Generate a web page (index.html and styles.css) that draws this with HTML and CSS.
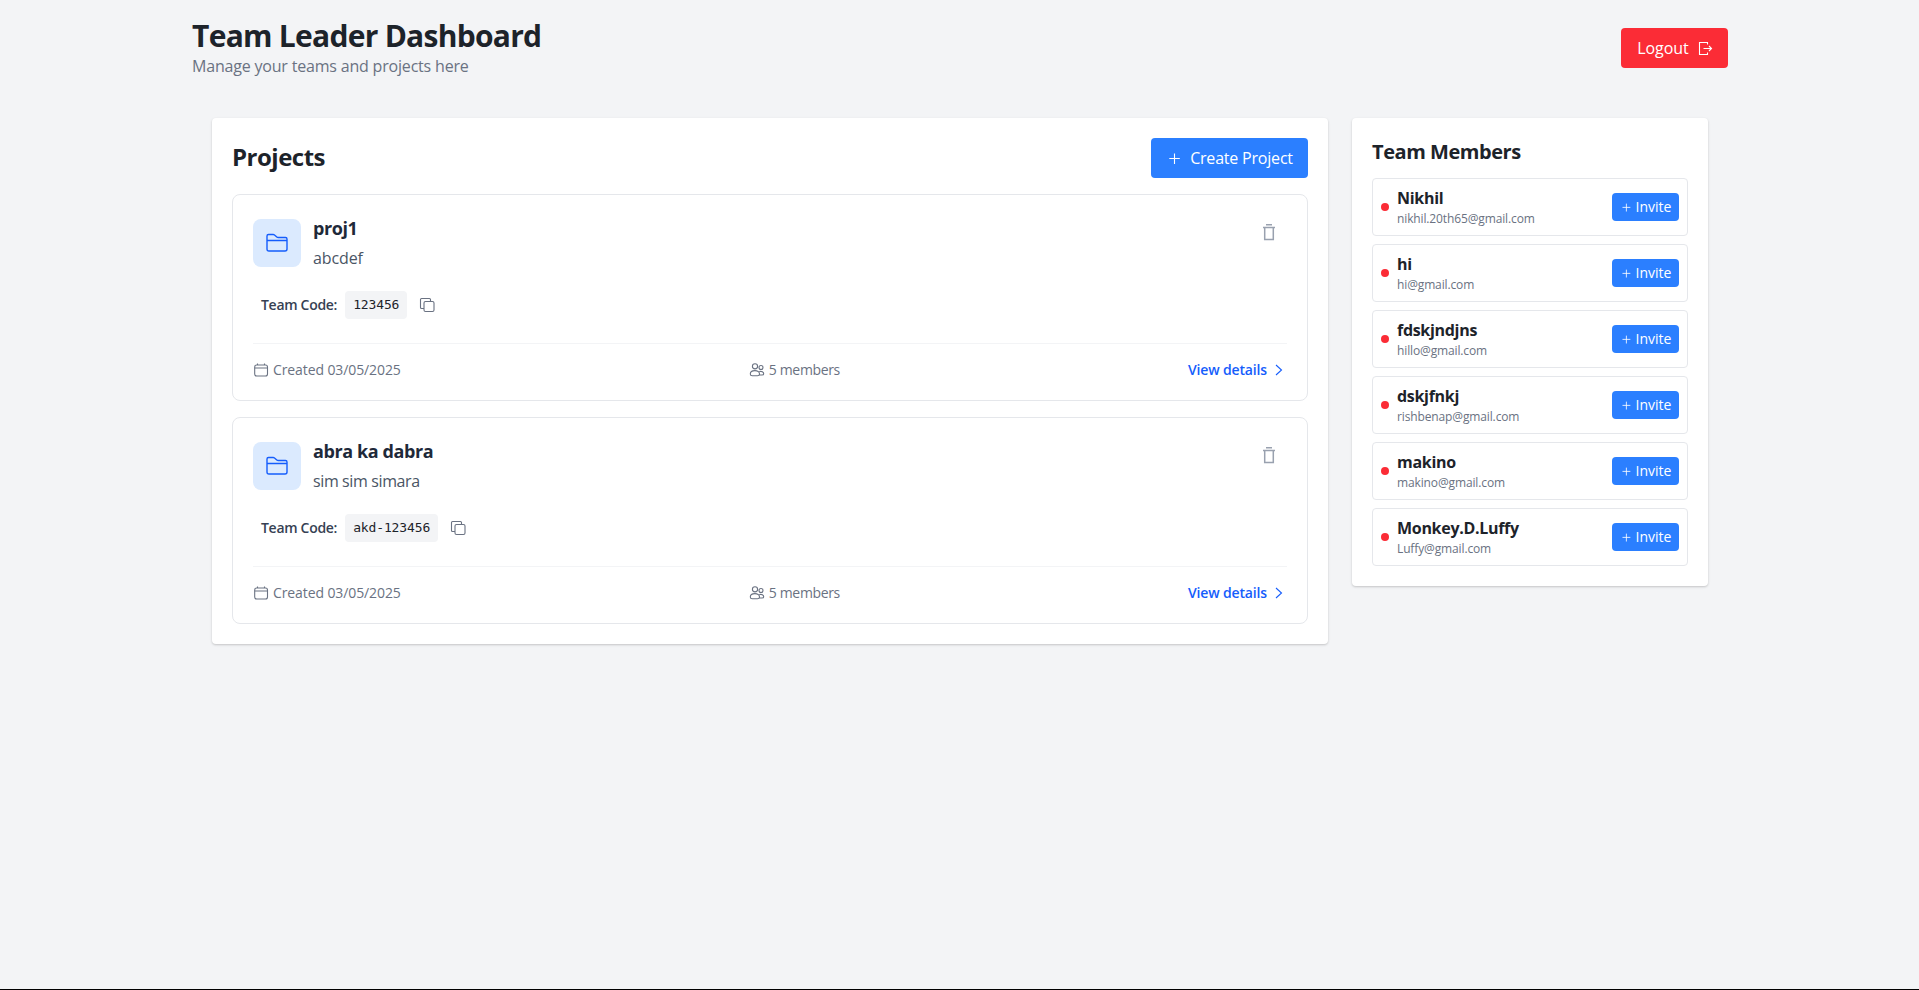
FILE: index.html
```
<!DOCTYPE html>
<html lang="en">
<head>
<meta charset="utf-8">
<title>Team Leader Dashboard</title>
<link rel="stylesheet" href="styles.css">
</head>
<body>
<svg class="sprite" aria-hidden="true">
  <symbol id="folder" viewBox="0 0 24 24"><path d="M2 9.500h20M2 18V5Q2 3.500 3.500 3.500h4.600q.8 0 1.400.5l2.300 2q.6.500 1.400.500h7.300Q22 6.500 22 8V18q0 2-2 2H4q-2 0-2-2z"/></symbol>
  <symbol id="trash" viewBox="0 0 20 20"><path d="M4 5.500h12M7 2.800h6M5.700 5.500v12h8.600v-12"/></symbol>
  <symbol id="copy" viewBox="0 0 16 16"><rect x="5" y="4.500" width="10" height="10" rx="1.500"/><path d="M5 11.500H2.500q-1 0-1-1v-8q0-1 1-1h8q1 0 1 1V4.500"/></symbol>
  <symbol id="calendar" viewBox="0 0 16 16"><rect x="1.700" y="3" width="12.800" height="11" rx="2"/><path d="M1.700 6h12.800M4.500 1.500v1.500M11.500 1.500v1.500"/></symbol>
  <symbol id="people" viewBox="0 0 16 16"><circle cx="6" cy="4.300" r="2.600"/><circle cx="12" cy="5.500" r="2"/><path d="M1.300 12c0-2 2-3.400 4.600-3.400s4.600 1.400 4.600 3.400c0 1.300-.9 1.800-2 1.800H3.300c-1.100 0-2-.5-2-1.800zM10.300 9.600c2.300-.8 4.400.4 4.400 2.100 0 .9-.6 1.300-1.600 1.300h-2.600"/></symbol>
  <symbol id="chevron" viewBox="0 0 16 16"><path d="M5 3l5.500 5L5 13"/></symbol>
  <symbol id="plus" viewBox="0 0 16 16"><path d="M8.500 3.500v10.500M3.300 8.500h10.500"/></symbol>
  <symbol id="exit" viewBox="0 0 16 16"><path d="M10.500 4.500V2.500h-8v12h8V12.500M6.500 8.500h8M12 6L14.500 8.500 12 11"/></symbol>
</svg>
<div class="page">
  <header class="top">
    <div>
      <h1>Team Leader Dashboard</h1>
      <p class="sub">Manage your teams and projects here</p>
    </div>
    <button class="btn logout">Logout <svg class="i16"><use href="#exit"/></svg></button>
  </header>
  <main class="content">
    <section class="card projects">
      <div class="projects-head">
        <h2>Projects</h2>
        <button class="btn create"><svg class="i16"><use href="#plus"/></svg>Create Project</button>
      </div>
      <article class="project">
        <div class="project-top">
          <div class="tile"><svg class="i24"><use href="#folder"/></svg></div>
          <div class="info"><h3>proj1</h3><p class="plain">abcdef</p></div>
          <svg class="i20 trash"><use href="#trash"/></svg>
        </div>
        <div class="code-row"><span class="label">Team Code:</span><code>123456</code><svg class="i16"><use href="#copy"/></svg></div>
        <div class="project-foot">
          <span class="meta"><svg class="i16"><use href="#calendar"/></svg>Created 03/05/2025</span>
          <span class="meta members"><svg class="i16"><use href="#people"/></svg>5 members</span>
          <a class="details">View details<svg class="i16"><use href="#chevron"/></svg></a>
        </div>
      </article>
      <article class="project">
        <div class="project-top">
          <div class="tile"><svg class="i24"><use href="#folder"/></svg></div>
          <div class="info"><h3>abra ka dabra</h3><p>sim sim simara</p></div>
          <svg class="i20 trash"><use href="#trash"/></svg>
        </div>
        <div class="code-row"><span class="label">Team Code:</span><code>akd-123456</code><svg class="i16"><use href="#copy"/></svg></div>
        <div class="project-foot">
          <span class="meta"><svg class="i16"><use href="#calendar"/></svg>Created 03/05/2025</span>
          <span class="meta members"><svg class="i16"><use href="#people"/></svg>5 members</span>
          <a class="details">View details<svg class="i16"><use href="#chevron"/></svg></a>
        </div>
      </article>
    </section>
    <aside class="card team">
      <h2>Team Members</h2>
      <ul>
        <li><i class="dot"></i><div class="who"><b>Nikhil</b><small>nikhil.20th65@gmail.com</small></div><button class="invite"><svg class="i12"><use href="#plus"/></svg>Invite</button></li>
        <li><i class="dot"></i><div class="who"><b>hi</b><small>hi@gmail.com</small></div><button class="invite"><svg class="i12"><use href="#plus"/></svg>Invite</button></li>
        <li><i class="dot"></i><div class="who"><b>fdskjndjns</b><small>hillo@gmail.com</small></div><button class="invite"><svg class="i12"><use href="#plus"/></svg>Invite</button></li>
        <li><i class="dot"></i><div class="who"><b>dskjfnkj</b><small>rishbenap@gmail.com</small></div><button class="invite"><svg class="i12"><use href="#plus"/></svg>Invite</button></li>
        <li><i class="dot"></i><div class="who"><b>makino</b><small>makino@gmail.com</small></div><button class="invite"><svg class="i12"><use href="#plus"/></svg>Invite</button></li>
        <li><i class="dot"></i><div class="who"><b>Monkey.D.Luffy</b><small>Luffy@gmail.com</small></div><button class="invite"><svg class="i12"><use href="#plus"/></svg>Invite</button></li>
      </ul>
    </aside>
  </main>
</div>
</body>
</html>
```
FILE: styles.css
```
* { box-sizing: border-box; margin: 0; padding: 0; }
body {
  background: #f3f4f6; color: #1d232a; min-height: 100vh;
  border-bottom: 1px solid #000;
  font: 16px/24px "Open Sans", "Noto Sans", sans-serif;
}
.sprite { display: none; }
svg { fill: none; stroke: currentColor; stroke-width: 1.1; flex: none; }
.i12 { width: 12px; height: 12px; }
.i16 { width: 16px; height: 16px; }
.i20 { width: 20px; height: 20px; stroke-width: 1.5; }
.i24 { width: 24px; height: 24px; stroke-width: 1.4; }
button { border: 0; font: inherit; color: #fff; border-radius: 4px; display: flex; align-items: center; justify-content: center; }
.page { width: 1536px; margin-left: 192px; }
.top { display: flex; justify-content: space-between; align-items: center; height: 98px; padding-bottom: 2px; }
.top > div { padding-bottom: 1px; }
h1 { font-size: 30px; line-height: 36px; font-weight: 700; letter-spacing: -0.73px; }
.sub { color: #6a7282; letter-spacing: -0.19px; }
.btn { height: 40px; gap: 8px; }
.logout { width: 107px; background: #fb2c36; letter-spacing: -0.05px; padding-left: 1px; }
.create { width: 157px; background: #2b7fff; letter-spacing: -0.2px; }
.content { display: flex; align-items: flex-start; gap: 24px; padding: 20px; }
.card { background: #fff; border-radius: 4px; padding: 20px; box-shadow: 0 1px 3px #0000001a, 0 1px 2px #0000001a; }
.projects { width: 1116px; }
.projects-head { display: flex; justify-content: space-between; align-items: center; }
.projects-head h2 { font-size: 24px; line-height: 32px; letter-spacing: -0.5px; padding-bottom: 2px; }
.project { margin-top: 16px; height: 207px; border: 1px solid #e5e7eb; border-radius: 8px; padding: 20px; }
.project-top { display: flex; gap: 12px; height: 60px; }
.tile { width: 48px; height: 48px; margin-top: 4px; border-radius: 8px; background: #dbeafe; color: #155dfc; display: flex; align-items: center; justify-content: center; }
.info { flex: 1; }
.info h3 { font-size: 18px; line-height: 26px; font-weight: 700; letter-spacing: -0.4px; color: #1e2939; }
.info p { color: #4a5565; margin-top: 5px; letter-spacing: -0.38px; }
.info .plain { letter-spacing: -0.1px; }
.trash { color: #99a1af; margin: 7px 8px 0 0; }
.code-row { display: flex; align-items: center; height: 28px; margin-top: 16px; padding-left: 8px; color: #6a7282; font-size: 14px; }
.label { color: #364153; font-weight: 600; margin-right: 8px; letter-spacing: -0.3px; }
code { font-family: "DejaVu Sans Mono", monospace; font-size: 13px; letter-spacing: -0.13px; background: #f3f4f6; color: #1d232a; border-radius: 4px; padding: 0 8px; line-height: 28px; margin-right: 12px; }
.project-foot { display: flex; justify-content: space-between; align-items: center; margin-top: 24px; border-top: 1px solid #f3f4f6; height: 53px; font-size: 14px; color: #6a7282; letter-spacing: -0.1px; }
.meta, .details { display: flex; align-items: center; gap: 4px; }
.members { letter-spacing: -0.35px; }
.details { color: #155dfc; font-weight: 600; letter-spacing: -0.15px; }
.team { width: 356px; height: 468px; }
.team h2 { font-size: 20px; line-height: 28px; margin-bottom: 12px; letter-spacing: -0.45px; }
.team ul { list-style: none; display: flex; flex-direction: column; gap: 8px; }
.team li { height: 58px; border: 1px solid #e5e7eb; border-radius: 4px; display: flex; align-items: center; padding: 0 8px; gap: 8px; }
.dot { width: 8px; height: 8px; border-radius: 50%; background: #fb2c36; }
.who { flex: 1; }
.who b, .who small { display: block; }
.who b { font-weight: 700; line-height: 22px; padding-bottom: 2px; letter-spacing: -0.3px; }
.who small { font-size: 12px; line-height: 16px; color: #6a7282; letter-spacing: -0.13px; }
.invite { width: 67px; height: 28px; background: #2b7fff; font-size: 14px; gap: 4px; }
```
